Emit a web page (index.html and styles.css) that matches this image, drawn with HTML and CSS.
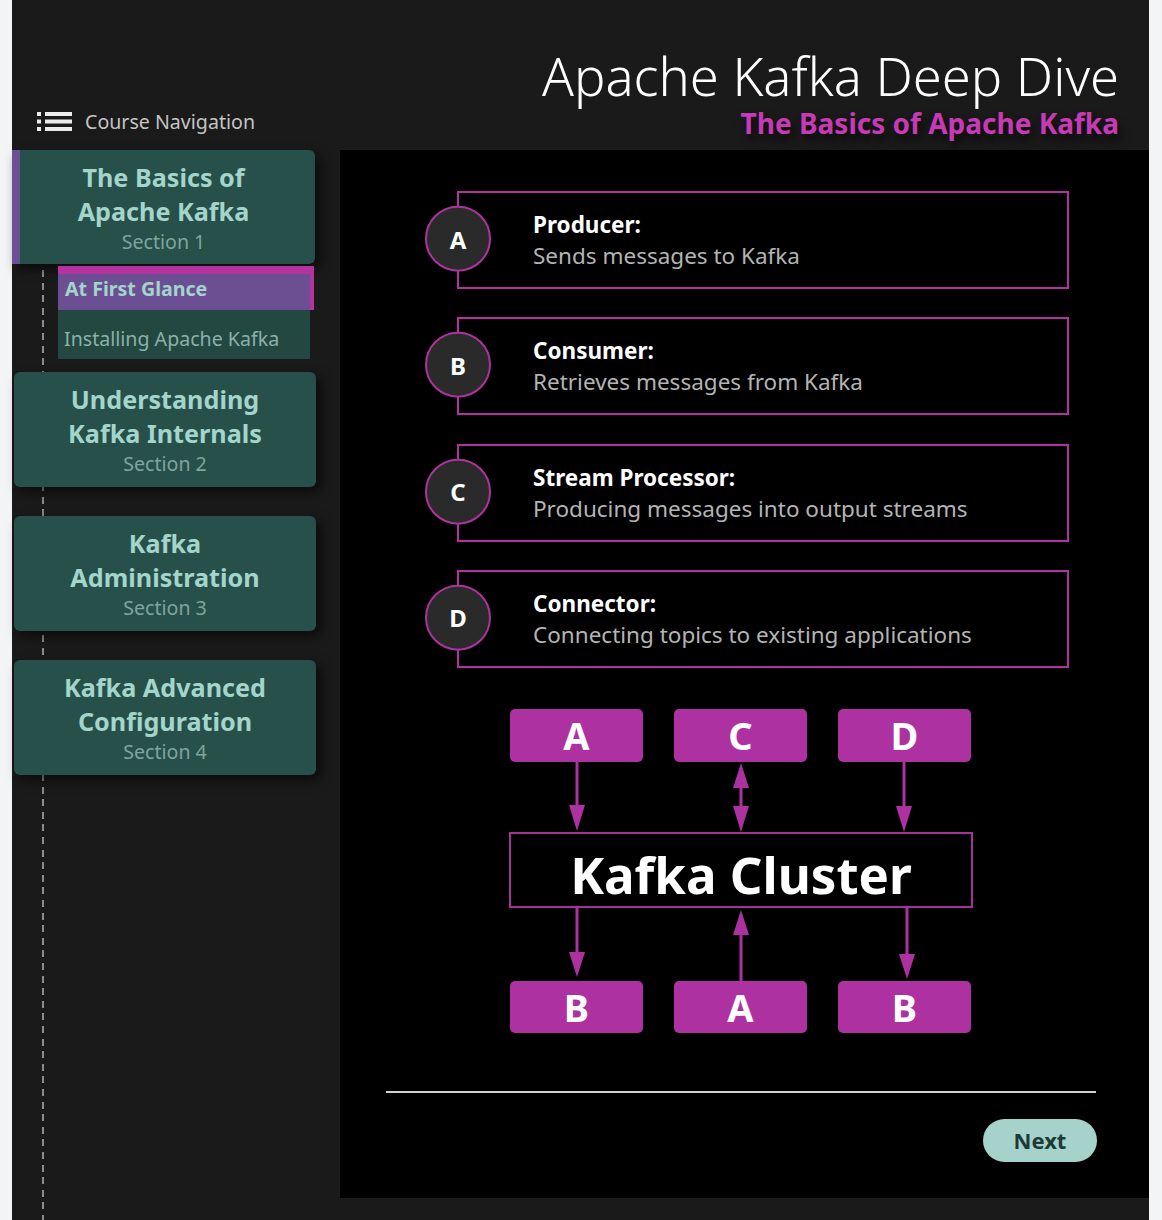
FILE: index.html
```html
<!DOCTYPE html>
<html lang="en">
<head>
<meta charset="utf-8">
<title>Apache Kafka Deep Dive</title>
<link rel="stylesheet" href="styles.css">
</head>
<body>
<div class="app">
  <header class="topbar">
    <div class="nav-label">
      <svg class="nav-icon" width="35" height="19" viewBox="0 0 35 19" aria-hidden="true">
        <rect x="0" y="0" width="4" height="4"/>
        <rect x="0" y="7.5" width="4" height="4"/>
        <rect x="0" y="15" width="4" height="4"/>
        <rect x="8" y="0" width="27" height="4"/>
        <rect x="8" y="7.5" width="27" height="4"/>
        <rect x="8" y="15" width="27" height="4"/>
      </svg>
      <span>Course Navigation</span>
    </div>
    <div class="titles">
      <h1 class="title">Apache Kafka Deep Dive</h1>
      <h2 class="subtitle">The Basics of Apache Kafka</h2>
    </div>
  </header>

  <div class="layout">
    <aside class="sidebar">
      <div class="group group-open">
        <div class="card card-current">
          <div class="card-title">The Basics of<br>Apache Kafka</div>
          <div class="card-section">Section 1</div>
        </div>
        <ul class="submenu">
          <li class="sub sub-active">At First Glance</li>
          <li class="sub">Installing Apache Kafka</li>
        </ul>
      </div>
      <div class="group">
        <div class="card">
          <div class="card-title">Understanding<br>Kafka Internals</div>
          <div class="card-section">Section 2</div>
        </div>
      </div>
      <div class="group">
        <div class="card">
          <div class="card-title">Kafka<br>Administration</div>
          <div class="card-section">Section 3</div>
        </div>
      </div>
      <div class="group">
        <div class="card">
          <div class="card-title">Kafka Advanced<br>Configuration</div>
          <div class="card-section">Section 4</div>
        </div>
      </div>
    </aside>

    <main class="main">
      <ul class="roles">
        <li class="role">
          <span class="badge">A</span>
          <div class="role-text">
            <strong class="role-name">Producer:</strong>
            <span class="role-desc">Sends messages to Kafka</span>
          </div>
        </li>
        <li class="role">
          <span class="badge">B</span>
          <div class="role-text">
            <strong class="role-name">Consumer:</strong>
            <span class="role-desc">Retrieves messages from Kafka</span>
          </div>
        </li>
        <li class="role">
          <span class="badge">C</span>
          <div class="role-text">
            <strong class="role-name">Stream Processor:</strong>
            <span class="role-desc">Producing messages into output streams</span>
          </div>
        </li>
        <li class="role">
          <span class="badge">D</span>
          <div class="role-text">
            <strong class="role-name">Connector:</strong>
            <span class="role-desc">Connecting topics to existing applications</span>
          </div>
        </li>
      </ul>

      <div class="diagram">
        <div class="node-row node-row-top">
          <div class="node">A</div>
          <div class="node">C</div>
          <div class="node">D</div>
        </div>
        <svg class="arrows arrows-top" width="464" height="70" viewBox="0 0 464 70" aria-hidden="true">
          <line x1="68" y1="0" x2="68" y2="44"/>
          <polygon points="60,43 76,43 68,69"/>
          <polygon points="232,1 224,26 240,26"/>
          <line x1="232" y1="25" x2="232" y2="45"/>
          <polygon points="224,44 240,44 232,70"/>
          <line x1="395" y1="0" x2="395" y2="45"/>
          <polygon points="387,44 403,44 395,70"/>
        </svg>
        <div class="cluster">Kafka Cluster</div>
        <svg class="arrows arrows-bottom" width="464" height="73" viewBox="0 0 464 73" aria-hidden="true">
          <line x1="68" y1="0" x2="68" y2="45"/>
          <polygon points="60,44 76,44 68,69"/>
          <polygon points="232,2 224,27 240,27"/>
          <line x1="232" y1="26" x2="232" y2="73"/>
          <line x1="398" y1="0" x2="398" y2="47"/>
          <polygon points="390,46 406,46 398,71"/>
        </svg>
        <div class="node-row node-row-bottom">
          <div class="node">B</div>
          <div class="node">A</div>
          <div class="node">B</div>
        </div>
      </div>

      <div class="divider"></div>

      <div class="actions">
        <button class="next" type="button">Next</button>
      </div>
    </main>
  </div>
</div>
</body>
</html>
```

FILE: styles.css
```css
* {
  box-sizing: border-box;
}

html, body {
  margin: 0;
  padding: 0;
}

body {
  background: #f3f4f6;
  font-family: "Noto Sans", "Open Sans", "DejaVu Sans", sans-serif;
}

.app {
  margin: 0 13px 0 12px;
  background: #1a1a1a;
  min-height: 1220px;
}

/* ---------- header ---------- */
.topbar {
  height: 150px;
  display: flex;
  justify-content: space-between;
  align-items: flex-end;
  padding: 0 30px 0 25px;
}

.nav-label {
  display: flex;
  align-items: center;
  gap: 13px;
  height: 28px;
  margin-bottom: 15px;
  color: #c4c4c4;
  font-size: 19.6px;
}

.nav-icon {
  fill: #ececec;
  display: block;
}

.titles {
  text-align: right;
  padding-bottom: 9px;
}

.title {
  margin: 0;
  font-size: 52.5px;
  font-weight: 300;
  line-height: 58px;
  color: #ffffff;
}

.subtitle {
  margin: 0;
  font-size: 28px;
  font-weight: 700;
  line-height: 36px;
  color: #c63bb5;
  text-shadow: 3px 6px 8px rgba(0, 0, 0, 0.6);
}

/* ---------- layout ---------- */
.layout {
  display: flex;
  align-items: stretch;
}

.sidebar {
  position: relative;
  width: 328px;
  flex: none;
  display: flex;
  flex-direction: column;
}

.sidebar::before {
  content: "";
  position: absolute;
  left: 30px;
  top: 120px;
  bottom: -22px;
  width: 2px;
  background: repeating-linear-gradient(to bottom, #8c8c8c 0 7px, transparent 7px 12.6px);
}

.group {
  position: relative;
  z-index: 1;
  margin-bottom: 29px;
}

.group-open {
  margin-bottom: 13px;
}

.card {
  margin-left: 2px;
  width: 302px;
  padding: 10px 8px 10px;
  background: #27504a;
  border-radius: 6px;
  text-align: center;
  box-shadow: 5px 5px 12px rgba(0, 0, 0, 0.6);
}

.card-current {
  margin-left: 0;
  width: 303px;
  border-radius: 0 6px 6px 0;
  padding-bottom: 9px;
  box-shadow: inset 8px 0 0 #6c4f94, 5px 5px 12px rgba(0, 0, 0, 0.6);
}

.card-title {
  font-size: 25.2px;
  font-weight: 700;
  line-height: 34px;
  color: #a3d5cb;
}

.card-section {
  font-size: 19.6px;
  line-height: 27px;
  color: #7ea59e;
}

.submenu {
  list-style: none;
  margin: 2px 0 0 46px;
  padding: 0;
}

.sub {
  width: 252px;
  font-size: 19.6px;
  line-height: 27px;
  padding: 15px 6px 7px;
  background: #234842;
  color: #8ab1a9;
  white-space: nowrap;
}

.sub-active {
  width: 256px;
  padding: 1px 7px 8px;
  border-top: 8px solid #b3339f;
  border-right: 4px solid #b3339f;
  background: #6c4f93;
  color: #a3d5cb;
  font-weight: 700;
}

/* ---------- main ---------- */
.main {
  flex: 1;
  background: #000000;
  margin-bottom: 22px;
  padding: 41px 53px 36px 46px;
}

.roles {
  list-style: none;
  margin: 0;
  padding: 0 27px 0 71px;
  display: flex;
  flex-direction: column;
  gap: 28.3px;
}

.role {
  position: relative;
  height: 98px;
  border: 2px solid #b0329f;
  display: flex;
  align-items: center;
  padding-left: 74px;
}

.badge {
  position: absolute;
  left: -34px;
  top: 50%;
  transform: translateY(-52%);
  width: 66px;
  height: 66px;
  border: 2px solid #b0329f;
  border-radius: 50%;
  background: #2a2a2a;
  color: #ffffff;
  font-size: 24px;
  font-weight: 700;
  display: flex;
  align-items: center;
  justify-content: center;
}

.role-text {
  display: flex;
  flex-direction: column;
  font-size: 22.5px;
  line-height: 31px;
}

.role-name {
  color: #ffffff;
  font-weight: 700;
}

.role-desc {
  color: #b4b4b4;
}

/* ---------- diagram ---------- */
.diagram {
  width: 464px;
  margin: 41px auto 0;
  display: flex;
  flex-direction: column;
}

.node-row {
  display: grid;
  grid-template-columns: repeat(3, 133px);
  gap: 31px;
  padding-left: 1px;
}

.node {
  background: #ad31a0;
  border-radius: 5px;
  color: #ffffff;
  font-size: 38px;
  font-weight: 700;
  display: flex;
  align-items: center;
  justify-content: center;
}

.node-row-top .node {
  height: 53px;
}

.node-row-bottom .node {
  height: 52px;
}

.arrows {
  display: block;
}

.arrows line {
  stroke: #ad31a0;
  stroke-width: 3;
}

.arrows polygon {
  fill: #ad31a0;
}

.cluster {
  height: 76px;
  border: 2px solid #a43399;
  color: #ffffff;
  font-size: 51px;
  font-weight: 700;
  padding-top: 8px;
  display: flex;
  align-items: center;
  justify-content: center;
}

.divider {
  margin-top: 58px;
  height: 2px;
  background: #d2d2d2;
}

.actions {
  margin-top: 26px;
  display: flex;
  justify-content: flex-end;
  margin-right: -1px;
}

.next {
  width: 114px;
  height: 43px;
  border: none;
  border-radius: 22px;
  background: #a5d3cb;
  color: #1c3b36;
  font-family: "Noto Sans", "Open Sans", sans-serif;
  font-size: 22px;
  font-weight: 700;
  cursor: pointer;
}
```
